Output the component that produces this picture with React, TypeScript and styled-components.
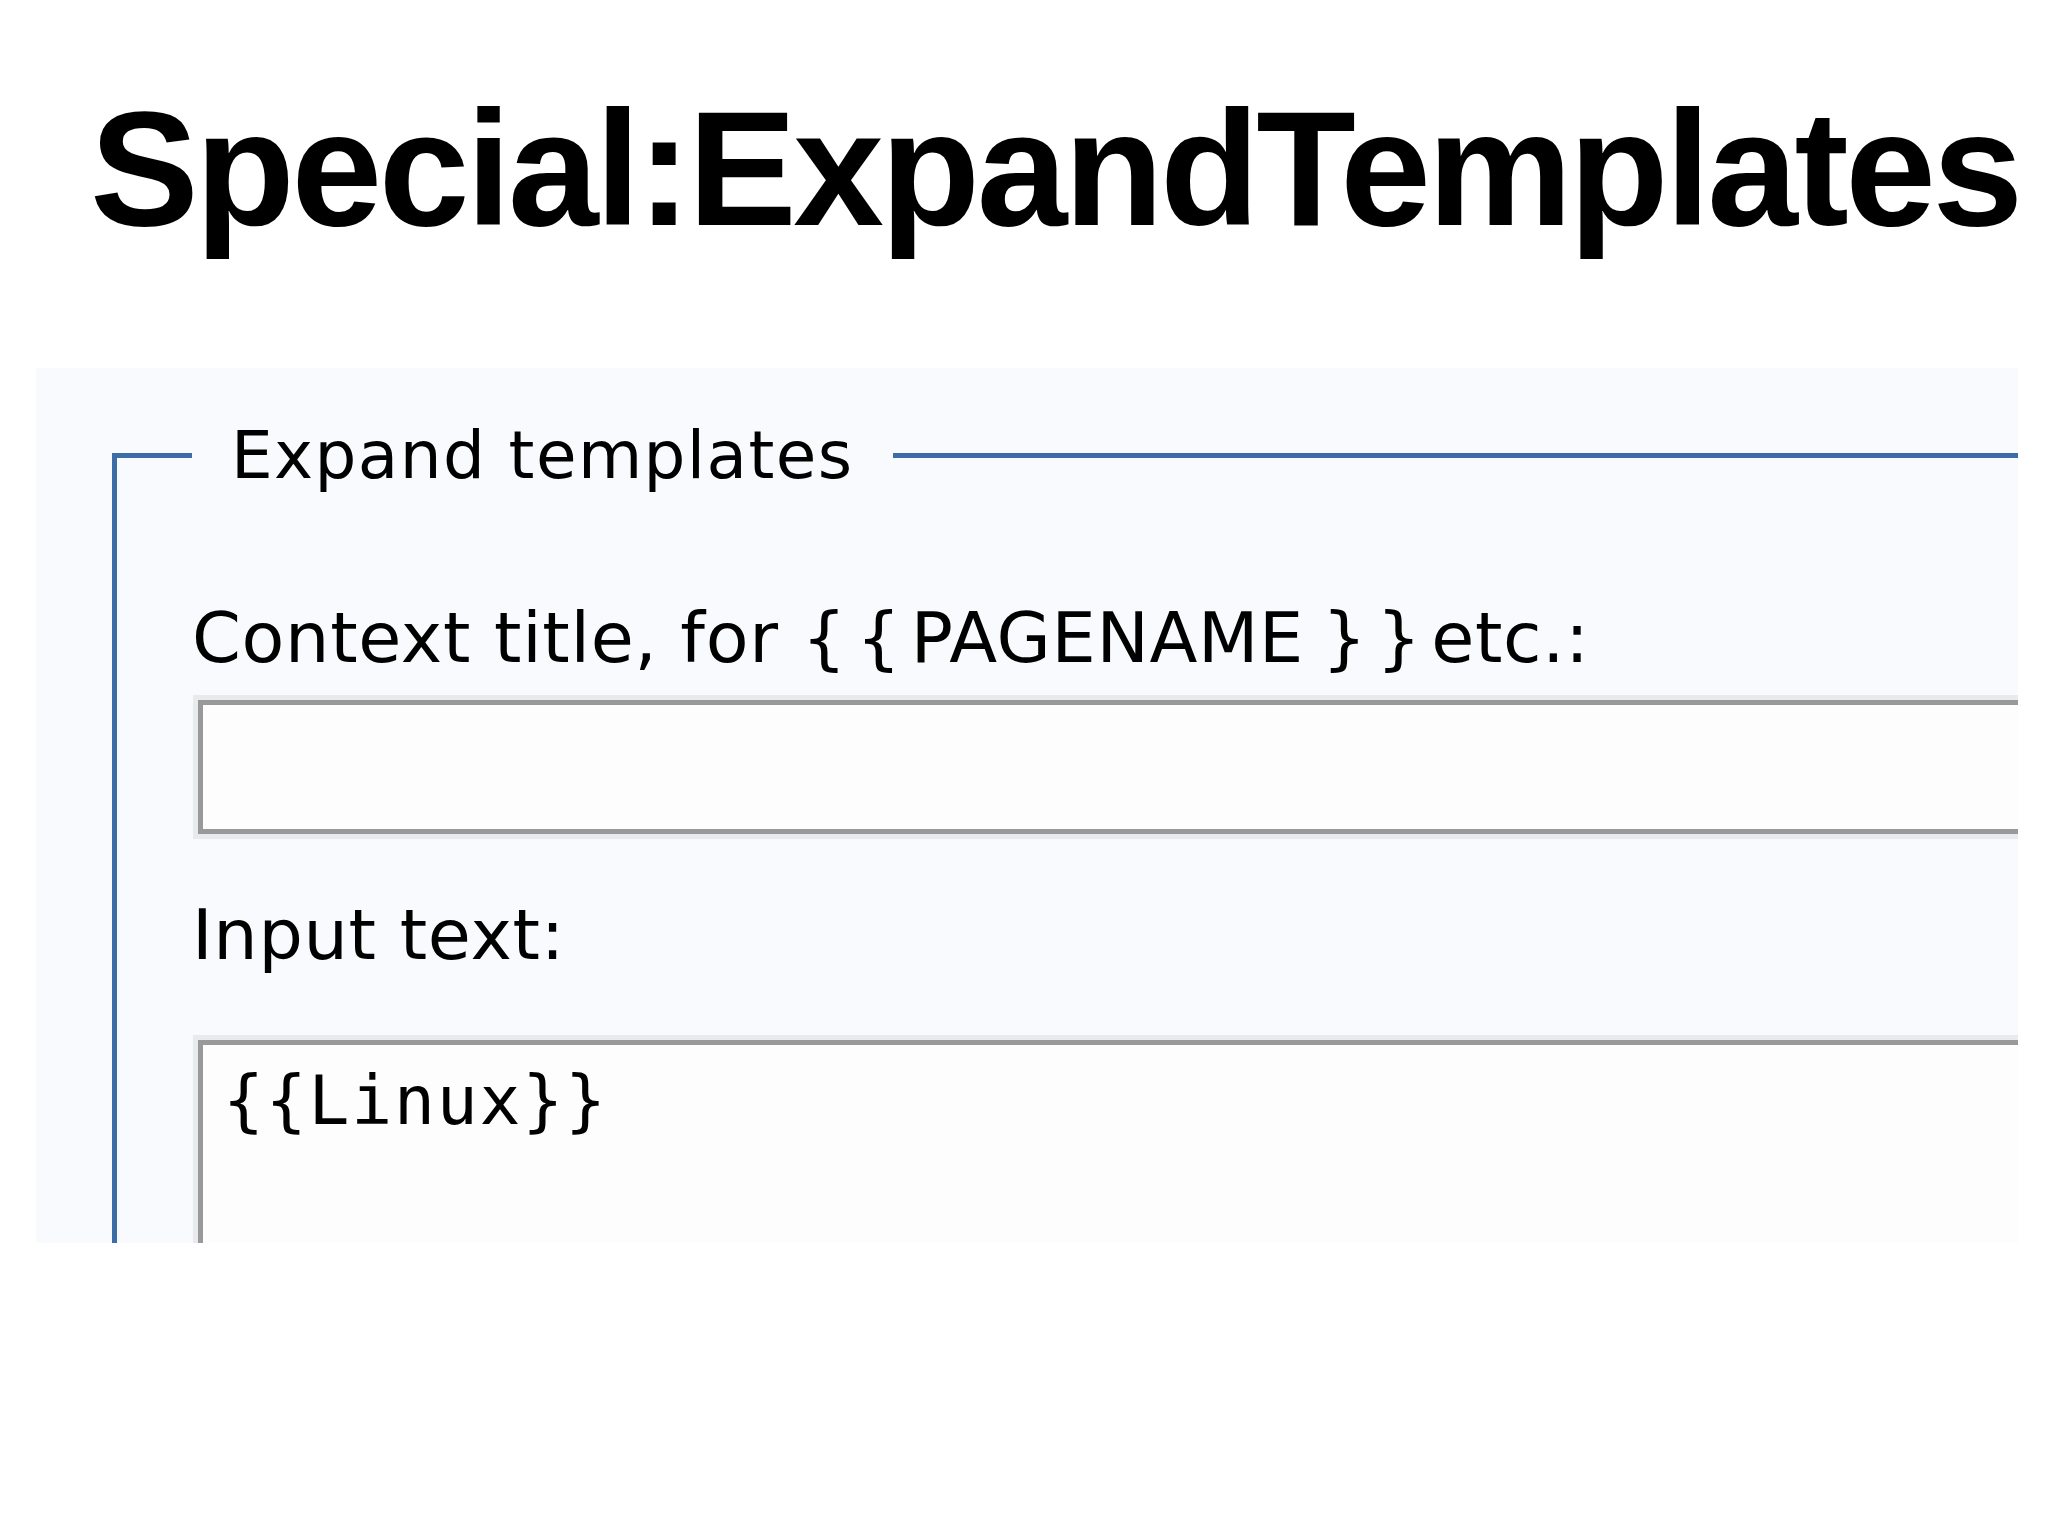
import styled, { createGlobalStyle } from 'styled-components';

const GlobalStyle = createGlobalStyle`
  html, body {
    margin: 0;
    padding: 0;
    background: #ffffff;
  }
  body {
    font-family: "DejaVu Sans", "Liberation Sans", sans-serif;
    color: #000;
  }
`

const Page = styled.div`
  width: 2048px;
  height: 1535px;
  overflow: hidden;
  background: #ffffff;
`

const Title = styled.h1`
  margin: 0;
  padding: 87px 0 0 90px;
  font-family: "Liberation Sans", Arial, sans-serif;
  font-weight: 700;
  font-size: 163px;
  line-height: 163px;
  letter-spacing: -3.4px;
  white-space: nowrap;
  color: #000;
`

const Panel = styled.div`
  margin: 118px 0 0 36px;
  width: 1982px;
  height: 875px;
  overflow: hidden;
  background: #f8fafd;
`

const Fieldset = styled.fieldset`
  margin: 49px 0 0 76px;
  padding: 0 0 0 75px;
  width: 2400px;
  border: 5px solid #3b6ea6;
  border-right: none;
  border-bottom: none;
  min-inline-size: auto;
`

const Legend = styled.legend`
  padding: 0 39px;
  font-size: 66px;
  line-height: normal;
  letter-spacing: 1.4px;
  color: #000;
`

const Label = styled.label<{ $gap: number }>`
  display: block;
  margin-top: ${p => p.$gap}px;
  font-size: 70px;
  line-height: normal;
  letter-spacing: 0.7px;
  white-space: nowrap;
  color: #000;
`

// the braces sit wider apart in the original rendering
const Braces = styled.span<{ $lead?: number }>`
  margin-left: ${p => p.$lead ?? 0}px;
  letter-spacing: 10px;
`

const TextInput = styled.input`
  display: block;
  box-sizing: border-box;
  margin: 21px 0 0 6px;
  width: 2000px;
  height: 134px;
  border: 5px solid #999999;
  box-shadow: 0 0 0 5px #e8eaed;
  background: #fdfdfe;
  outline: none;
`

const TextArea = styled.textarea`
  display: block;
  box-sizing: border-box;
  margin: 64px 0 0 6px;
  padding: 16px 20px;
  width: 2000px;
  height: 420px;
  border: 5px solid #999999;
  box-shadow: 0 0 0 5px #e8eaed;
  background: #fdfdfe;
  outline: none;
  resize: none;
  font-family: "DejaVu Sans Mono", "Liberation Mono", monospace;
  font-size: 68px;
  line-height: normal;
  letter-spacing: 1.8px;
  color: #000;
`

export default function App() {
  return (
    <Page>
      <GlobalStyle />
      <Title>Special:ExpandTemplates</Title>
      <Panel>
        <Fieldset>
          <Legend>Expand templates</Legend>
          <Label $gap={103} htmlFor="wpContextTitle">
            Context title, for <Braces>{'{{'}</Braces>PAGENAME<Braces $lead={18}>{'}}'}</Braces>etc.:
          </Label>
          <TextInput id="wpContextTitle" type="text" />
          <Label $gap={60} htmlFor="wpInput">Input text:</Label>
          <TextArea id="wpInput" defaultValue={'{{Linux}}'} />
        </Fieldset>
      </Panel>
    </Page>
  );
}
